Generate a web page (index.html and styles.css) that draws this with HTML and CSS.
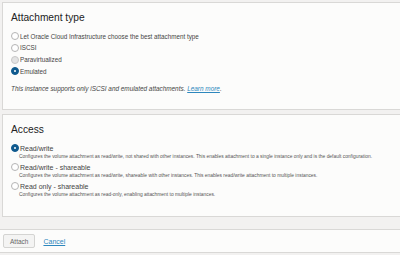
FILE: index.html
```html
<!DOCTYPE html>
<html lang="en">
<head>
  <meta charset="UTF-8" />
  <title>Attach block volume</title>
  <link rel="stylesheet" href="styles.css">
</head>
<body>
  <div class="panel">
    <h2>Attachment type</h2>
    <div class="options">
      <label class="option"><span class="radio"></span>Let Oracle Cloud Infrastructure choose the best attachment type</label>
      <label class="option"><span class="radio"></span>ISCSI</label>
      <label class="option"><span class="radio disabled"></span>Paravirtualized</label>
      <label class="option"><span class="radio checked"></span>Emulated</label>
    </div>
    <p class="note">This instance supports only iSCSI and emulated attachments. <a href="#">Learn more</a>.</p>
  </div>

  <div class="panel">
    <h2>Access</h2>
    <div class="access">
      <div class="access-item">
        <label class="option big"><span class="radio checked"></span>Read/write</label>
        <div class="desc">Configures the volume attachment as read/write, not shared with other instances. This enables attachment to a single instance only and is the default configuration.</div>
      </div>
      <div class="access-item">
        <label class="option big"><span class="radio"></span>Read/write - shareable</label>
        <div class="desc">Configures the volume attachment as read/write, shareable with other instances. This enables read/write attachment to multiple instances.</div>
      </div>
      <div class="access-item">
        <label class="option big"><span class="radio"></span>Read only - shareable</label>
        <div class="desc">Configures the volume attachment as read-only, enabling attachment to multiple instances.</div>
      </div>
    </div>
  </div>

  <div class="footer">
    <button type="button">Attach</button>
    <a href="#">Cancel</a>
  </div>
</body>
</html>
```

FILE: styles.css
```css
body {
  font-family: "Liberation Sans", Arial, sans-serif;
  background: #f2f1f0;
  margin: 0;
  padding-top: 2px;
  overflow: hidden;
  color: #333;
}

.panel {
  background: #fcfcfb;
  border: 1px solid #d9d8d6;
  margin: 0 -4px 4px 2px;
  padding: 9px 8px 0 8px;
}

h2 {
  font-size: 10.2px;
  font-weight: normal;
  color: #222;
  margin: 0 0 9px;
}

.options {
  display: flex;
  flex-direction: column;
  gap: 3.8px;
}

.option {
  display: flex;
  align-items: center;
  gap: 1px;
  font-size: 6.3px;
  color: #444;
  height: 8px;
}

.option.big {
  font-size: 7px;
}

.radio {
  width: 6px;
  height: 6px;
  border-radius: 50%;
  border: 0.8px solid #b5b5b5;
  background: #fff;
  position: relative;
}

.radio.disabled {
  background: #e3e3e3;
  border-color: #c8c8c8;
}

.radio.checked {
  background: #0f5a8e;
  border-color: #0f5a8e;
}

.radio.checked::after {
  content: "";
  position: absolute;
  left: 2px;
  top: 2px;
  width: 2px;
  height: 2px;
  border-radius: 50%;
  background: #fff;
}

.note {
  font-size: 6.4px;
  font-style: italic;
  color: #444;
  margin: 10px 0 17px;
}

a {
  color: #2d87bd;
}

.access {
  display: flex;
  flex-direction: column;
  gap: 4px;
  padding-bottom: 19px;
}

.desc {
  font-size: 4.9px;
  color: #555;
  margin: 2px 0 0 8px;
}

.footer {
  background: #fcfcfb;
  border-top: 1px solid #d9d8d6;
  border-bottom: 1px solid #d9d8d6;
  margin-top: 12px;
  padding: 4px 3px;
  display: flex;
  align-items: center;
  gap: 8px;
  font-size: 7px;
}

button {
  font-family: inherit;
  font-size: 6.5px;
  color: #666;
  background: #f4f4f3;
  border: 1px solid #d4d4d2;
  border-radius: 2px;
  height: 14px;
  padding: 0 6px;
}
```
